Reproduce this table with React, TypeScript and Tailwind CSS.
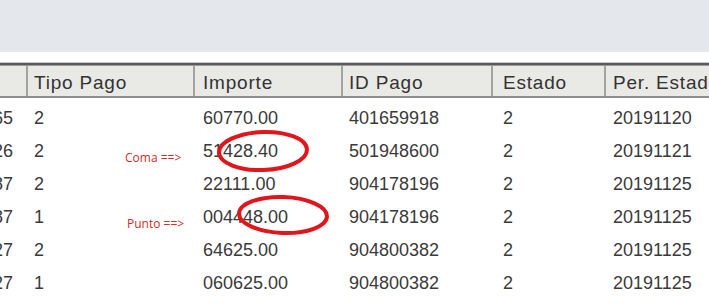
const cols = [
  { w: 'w-[28px]', pl: '' },
  { w: 'w-[167px]', pl: 'pl-[6px]' },
  { w: 'w-[148px]', pl: 'pl-[8px]' },
  { w: 'w-[150px]', pl: 'pl-[6px]' },
  { w: 'w-[113px]', pl: 'pl-[10px]' },
  { w: 'flex-1', pl: 'pl-[7px]' },
]

const headers = ['', 'Tipo Pago', 'Importe', 'ID Pago', 'Estado', 'Per. Estado']

const rows = [
  ['765', '2', '60770.00', '401659918', '2', '20191120'],
  ['326', '2', '51428.40', '501948600', '2', '20191121'],
  ['387', '2', '22111.00', '904178196', '2', '20191125'],
  ['387', '1', '004448.00', '904178196', '2', '20191125'],
  ['327', '2', '64625.00', '904800382', '2', '20191125'],
  ['327', '1', '060625.00', '904800382', '2', '20191125'],
]

export default function App() {
  return (
    <div className="w-[709px] h-[306px] overflow-hidden bg-white font-['Liberation_Sans',Arial,sans-serif]">
      {/* top band */}
      <div className="h-[52px] bg-[#e4e8ec]" />
      <div className="h-[10px] bg-white" />

      {/* grid header */}
      <div className="border-t border-[#c8c8c8]">
        <div className="h-[3px] bg-[#5a5a5a] border-b border-[#9a9a9a]" />
        <div className="flex h-[32px] bg-[#e9e9e6] border-b-2 border-[#8e8e8c]">
          {headers.map((h, i) => (
            <div
              key={i}
              className={`${cols[i].w} ${cols[i].pl} shrink-0 flex items-center pt-[5px] overflow-hidden whitespace-nowrap text-[19px] tracking-[0.8px] text-[#333] ${
                i < headers.length - 1 ? 'border-r-2 border-r-[#a3a3a0]' : ''
              }`}
            >
              {h}
            </div>
          ))}
        </div>
      </div>

      {/* rows */}
      <div className="relative pt-[4px]">
        {rows.map((r, ri) => (
          <div key={ri} className="flex h-[33px] items-center text-[18px] text-[#3a3a3a]">
            {r.map((c, ci) => (
              <div
                key={ci}
                className={`${cols[ci].w} ${cols[ci].pl} shrink-0 overflow-hidden whitespace-nowrap ${
                  ci === 0 ? 'flex justify-end pr-[13px]' : ''
                } ${ci < r.length - 1 ? 'border-r-2 border-r-transparent' : ''}`}
              >
                {c}
              </div>
            ))}
          </div>
        ))}

        {/* annotations */}
        <span className="absolute left-[125px] top-[51px] text-[12px] text-[#d42a2a] font-['Open_Sans',sans-serif]">
          Coma ==&gt;
        </span>
        <span className="absolute left-[127px] top-[117px] text-[12px] text-[#d42a2a] font-['Open_Sans',sans-serif]">
          Punto ==&gt;
        </span>
        <svg className="absolute left-0 top-0" width="709" height="210" viewBox="0 0 709 210">
          <ellipse cx="263" cy="53" rx="44" ry="19" fill="none" stroke="#e0161b" strokeWidth="4" transform="rotate(-2 263 53)" />
          <ellipse cx="283" cy="117" rx="44" ry="18" fill="none" stroke="#e0161b" strokeWidth="4" transform="rotate(2 283 117)" />
        </svg>
      </div>
    </div>
  )
}
